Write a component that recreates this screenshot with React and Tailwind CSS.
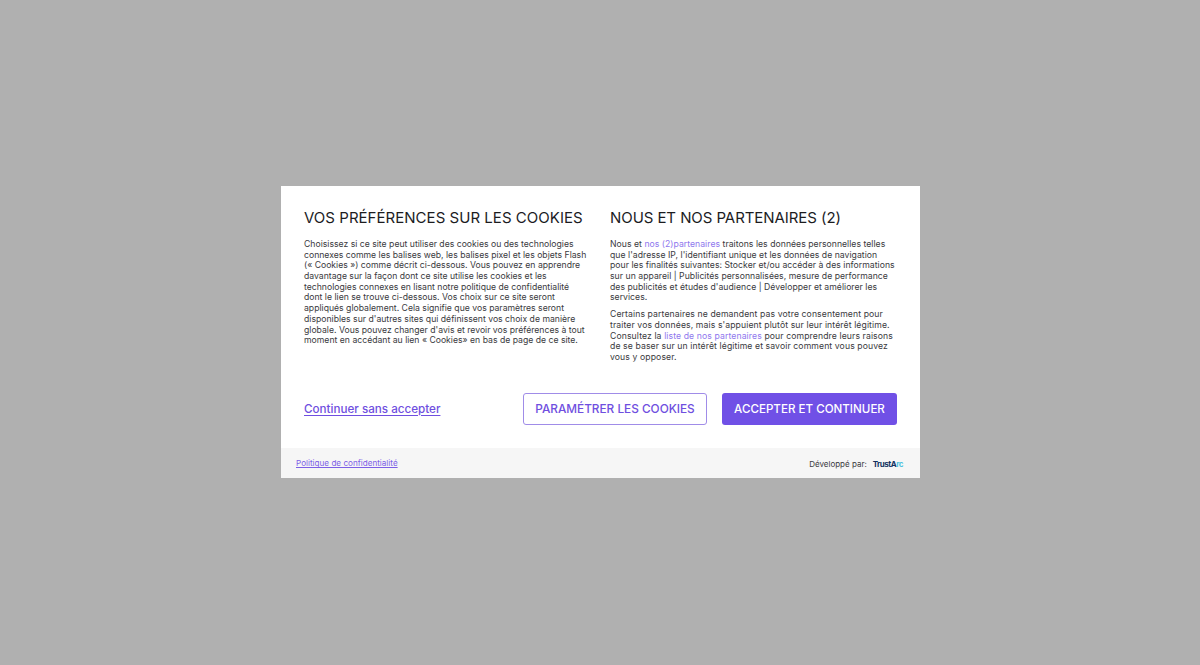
const leftLines = [
  'Choisissez si ce site peut utiliser des cookies ou des technologies',
  'connexes comme les balises web, les balises pixel et les objets Flash',
  '(« Cookies ») comme décrit ci-dessous. Vous pouvez en apprendre',
  'davantage sur la façon dont ce site utilise les cookies et les',
  'technologies connexes en lisant notre politique de confidentialité',
  'dont le lien se trouve ci-dessous. Vos choix sur ce site seront',
  'appliqués globalement. Cela signifie que vos paramètres seront',
  "disponibles sur d'autres sites qui définissent vos choix de manière",
  "globale. Vous pouvez changer d'avis et revoir vos préférences à tout",
  'moment en accédant au lien « Cookies» en bas de page de ce site.',
]

function Line({ children }) {
  return <span className="block whitespace-nowrap">{children}</span>
}

export default function App() {
  return (
    <div className="h-screen bg-[#b0b0b0] flex items-center justify-center pl-px pb-px font-['Inter',sans-serif]">
      <div className="w-[639px] h-[292px] bg-white flex flex-col text-[#3a3a40]">
        <div className="flex-1 flex flex-col px-[23px] pt-[22px]">
          <div className="flex">
            <div className="w-[306px] shrink-0">
              <h2 className="text-[15px] tracking-[0.03px] leading-[20px] text-[#1c1c1f] whitespace-nowrap">VOS PRÉFÉRENCES SUR LES COOKIES</h2>
              <p className="mt-[11px] text-[8.66px] leading-[10.68px]">
                {leftLines.map((l) => <Line key={l}>{l}</Line>)}
              </p>
            </div>
            <div className="shrink-0">
              <h2 className="text-[15px] tracking-[-0.07px] leading-[20px] text-[#1c1c1f] whitespace-nowrap">NOUS ET NOS PARTENAIRES (2)</h2>
              <p className="mt-[11px] text-[8.66px] tracking-[0.03px] leading-[10.68px]">
                <Line>Nous et <a className="text-[#8f78ee]">nos (2)partenaires</a> traitons les données personnelles telles</Line>
                <Line>que l'adresse IP, l'identifiant unique et les données de navigation</Line>
                <Line>pour les finalités suivantes: Stocker et/ou accéder à des informations</Line>
                <Line>sur un appareil | Publicités personnalisées, mesure de performance</Line>
                <Line>des publicités et études d'audience | Développer et améliorer les</Line>
                <Line>services.</Line>
              </p>
              <p className="mt-[6px] text-[8.66px] tracking-[0.1px] leading-[10.68px]">
                <Line>Certains partenaires ne demandent pas votre consentement pour</Line>
                <Line>traiter vos données, mais s'appuient plutôt sur leur intérêt légitime.</Line>
                <Line>Consultez la <a className="text-[#8f78ee]">liste de nos partenaires</a> pour comprendre leurs raisons</Line>
                <Line>de se baser sur un intérêt légitime et savoir comment vous pouvez</Line>
                <Line>vous y opposer.</Line>
              </p>
            </div>
          </div>
          <div className="flex items-center mt-[30px]">
            <a className="pt-[2px] text-[11.65px] font-medium text-[#6f4fe0] underline underline-offset-2">Continuer sans accepter</a>
            <button className="ml-auto w-[184px] h-[32px] pt-[2px] rounded-[3px] border border-[#a08ce8] text-[11.8px] font-medium text-[#6f4fe0] whitespace-nowrap">PARAMÉTRER LES COOKIES</button>
            <button className="ml-[15px] w-[175px] h-[32px] pt-[2px] rounded-[3px] bg-[#7050e6] text-[11.6px] font-medium text-white whitespace-nowrap">ACCEPTER ET CONTINUER</button>
          </div>
        </div>
        <div className="h-[30px] bg-[#f6f6f6] flex items-center justify-between pl-[15px] pr-[17px] pt-px">
          <a className="text-[8.15px] text-[#7c5fe6] underline">Politique de confidentialité</a>
          <div className="flex items-center gap-[6px] text-[8px] text-[#3a3a3e]">
            <span>Développé par:</span>
            <span className="font-bold tracking-[-0.5px] text-[#12325f]">TrustA<span className="text-[#4fc3e0]">rc</span></span>
          </div>
        </div>
      </div>
    </div>
  )
}
